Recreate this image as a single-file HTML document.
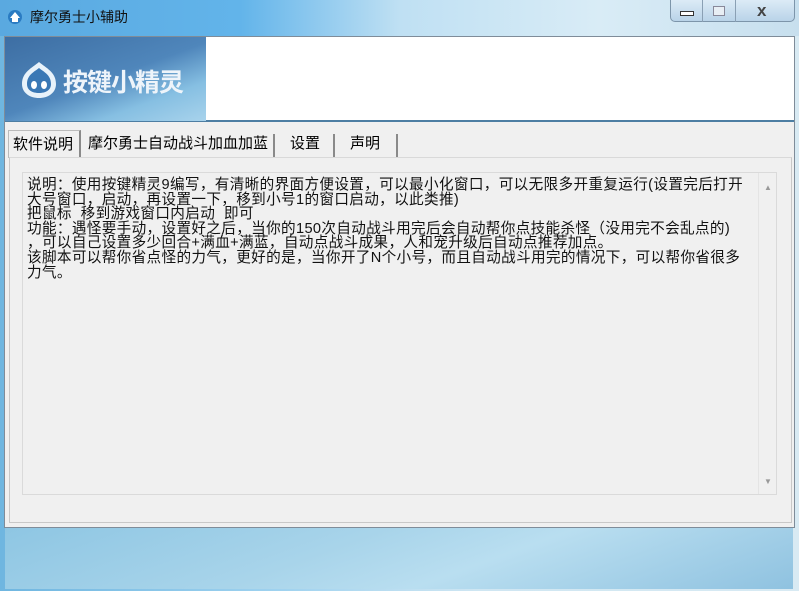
<!DOCTYPE html>
<html><head><meta charset="utf-8"><style>
*{margin:0;padding:0;box-sizing:border-box}
body{width:799px;height:591px;overflow:hidden;position:relative;background:linear-gradient(90deg,#6fb6e0 0%,#9fd2ef 35%,#cfe6f2 60%,#d8eaf3 100%);font-family:"Liberation Sans","Noto Sans CJK SC",sans-serif}
.title{position:absolute;left:0;top:0;width:799px;height:36px;background:linear-gradient(90deg,#5aa9e0 0%,#62b4ea 30%,#bfe0f3 50%,#d9ecf6 75%,#c7dfee 100%)}
.title span{position:absolute;left:30px;top:7px;font-size:14px;color:#111}
.client{position:absolute;left:4px;top:36px;width:791px;height:492px;background:#f0f0f0;border:1px solid #7f8c99}
.banner{position:absolute;left:0;top:0;width:789px;height:85px;background:#fff;border-bottom:2px solid #4d7ea3}
.logo{position:absolute;left:0;top:0;width:201px;height:84px;background:linear-gradient(160deg,#3d6ea3 0%,#4f86bb 50%,#86bfe2 75%,#a8d3ec 100%)}
.logo span{position:absolute;left:58px;top:26px;font-size:25px;font-weight:bold;color:#eef4fa;letter-spacing:-1px}
.tab{position:absolute;top:97px;height:24px;font-size:15px;line-height:20px;color:#000;border-right:2px solid #8a8a8a;white-space:nowrap}
.panel{position:absolute;left:4px;top:120px;width:783px;height:366px;border:1px solid #c8c8c8;border-top:1px solid #d9d9d9}
.text{position:absolute;left:17px;top:135px;width:755px;height:323px;border:1px solid #dadada;background:#f0f0f0}
pre{position:absolute;left:4px;top:5px;font-family:"Liberation Sans","Noto Sans CJK SC",sans-serif;font-size:14.6px;line-height:14.6px;color:#111;letter-spacing:0.35px}
.sb{position:absolute;right:0;top:0;width:18px;height:100%;border-left:1px solid #e4e4e4}
.bottom{position:absolute;left:5px;top:528px;width:788px;height:61px;background:linear-gradient(160deg,#8ec6e3 0%,#a8d4ea 40%,#b9def0 60%,#8fc2e0 100%)}
</style></head><body>
<div class="title">
<svg style="position:absolute;left:7px;top:9px" width="16" height="16" viewBox="0 0 16 16"><circle cx="8" cy="8" r="7" fill="#2a7bc2"/><path d="M3 9 L8 3 L13 9 L11 9 L11 13 L5 13 L5 9Z" fill="#fff"/></svg>
<span>摩尔勇士小辅助</span>
<div style="position:absolute;left:670px;top:0;width:125px;height:22px;border:1px solid #7d95aa;border-top:none;border-radius:0 0 5px 5px;background:linear-gradient(#dcebf6,#b9d3e8)"></div>
<div style="position:absolute;left:702px;top:0;width:1px;height:22px;background:#8aa0b4"></div>
<div style="position:absolute;left:735px;top:0;width:1px;height:22px;background:#8aa0b4"></div>
<div style="position:absolute;left:680px;top:11px;width:14px;height:5px;border:1px solid #333;background:#fff"></div>
<div style="position:absolute;left:713px;top:6px;width:12px;height:10px;border:1px solid #889;background:#e8eef4"></div>
<div style="position:absolute;left:757px;top:1px;font-size:17px;font-weight:bold;color:#444">x</div>
</div>
<div class="client">
<div class="banner"><div class="logo">
<svg style="position:absolute;left:15px;top:23px" width="38" height="40" viewBox="0 0 38 40"><path d="M19 2 C26 8 36 12 36 24 C36 33 28 38 19 38 C10 38 2 33 2 24 C2 12 12 8 19 2Z" fill="#e8f2fa"/><path d="M19 8 C24 12 31 15 31 24 C31 30 26 33 19 33 C12 33 7 30 7 24 C7 15 14 12 19 8Z" fill="#3a78b5"/><ellipse cx="14" cy="25" rx="3" ry="4" fill="#fff"/><ellipse cx="24" cy="25" rx="3" ry="4" fill="#fff"/></svg>
<span>按键小精灵</span></div></div>
<div class="tab" style="left:3px;top:93px;width:73px;height:28px;background:#f0f0f0;border:1px solid #bbb;border-bottom:none;border-right:2px solid #8a8a8a;padding:4px 0 0 4px">软件说明</div>
<div class="tab" style="left:80px;width:190px;padding-left:3px">摩尔勇士自动战斗加血加蓝</div>
<div class="tab" style="left:273px;width:57px;padding-left:12px">设置</div>
<div class="tab" style="left:333px;width:60px;padding-left:12px">声明</div>
<div class="panel"></div>
<div class="text">
<pre>说明：使用按键精灵9编写，有清晰的界面方便设置，可以最小化窗口，可以无限多开重复运行(设置完后打开
大号窗口，启动，再设置一下，移到小号1的窗口启动，以此类推)
把鼠标  移到游戏窗口内启动  即可
功能：遇怪要手动，设置好之后，当你的150次自动战斗用完后会自动帮你点技能杀怪（没用完不会乱点的)
，可以自己设置多少回合+满血+满蓝，自动点战斗成果，人和宠升级后自动点推荐加点。
该脚本可以帮你省点怪的力气，更好的是，当你开了N个小号，而且自动战斗用完的情况下，可以帮你省很多
力气。</pre>
<div class="sb"><div style="position:absolute;left:5px;top:10px;font-size:8px;color:#999">▲</div><div style="position:absolute;left:5px;bottom:8px;font-size:8px;color:#999">▼</div></div>
</div>
</div>
<div class="bottom"></div>
</body></html>
